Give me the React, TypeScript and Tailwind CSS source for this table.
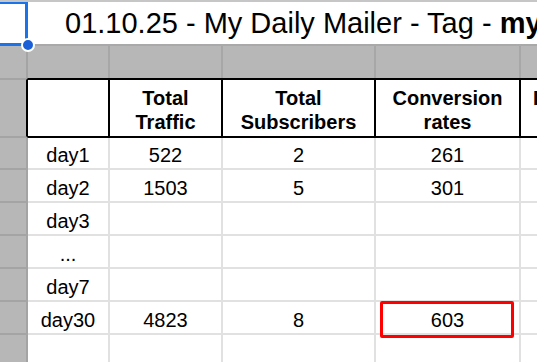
import React from "react";

const rows: { label: string; c1: string; c2: string; c3: string; h: string }[] = [
  { label: "day1", c1: "522", c2: "2", c3: "261", h: "h-[32px]" },
  { label: "day2", c1: "1503", c2: "5", c3: "301", h: "h-[33px]" },
  { label: "day3", c1: "", c2: "", c3: "", h: "h-[33px]" },
  { label: "...", c1: "", c2: "", c3: "", h: "h-[33px]" },
  { label: "day7", c1: "", c2: "", c3: "", h: "h-[33px]" },
  { label: "day30", c1: "4823", c2: "8", c3: "603", h: "h-[33px]" },
  { label: "", c1: "", c2: "", c3: "", h: "h-[33px]" },
];

const dataCell =
  "border-r-2 border-b-2 border-[#e1e1e1] flex items-end justify-center pb-[1px] leading-[24px] text-[20px] whitespace-nowrap";

export default function App() {
  return (
    <div className="relative w-[537px] h-[362px] overflow-hidden bg-white text-black font-['Liberation_Sans',Arial,sans-serif]">
      {/* top strip */}
      <div className="h-[2px] bg-[#c6c6c6]" />
      {/* title row */}
      <div className="flex h-[44px]">
        <div className="w-[28px] h-[44px] shrink-0 border-t-2 border-r-[3px] border-b-[3px] border-[#1a73e8] bg-white" />
        <div className="flex-1 border-b-2 border-[#a9a9a9] pl-[37px] pt-[5px] text-[29px] leading-[33px] whitespace-nowrap overflow-hidden">
          01.10.25 - My Daily Mailer - Tag - <span className="font-bold">my</span>
        </div>
      </div>
      {/* gray frozen row */}
      <div className="flex h-[32px] bg-[#b7b7b7]">
        <div className="w-[28px] shrink-0 border-r-2 border-[#a4a4a4]" />
        <div className="w-[82px] shrink-0 border-r-2 border-[#a7a7a7]" />
        <div className="w-[113px] shrink-0 border-r-2 border-[#a7a7a7]" />
        <div className="w-[153px] shrink-0 border-r-2 border-[#a7a7a7]" />
        <div className="w-[145px] shrink-0 border-r-2 border-[#a7a7a7]" />
        <div className="flex-1" />
      </div>
      {/* header row */}
      <div className="flex h-[60px] font-bold text-[20px] leading-[24px]">
        <div className="w-[28px] shrink-0 bg-[#b7b7b7] border-t-2 border-b-2 border-[#a4a4a4] border-r-2 border-r-black" />
        <div className="w-[82px] shrink-0 border-t-2 border-b-2 border-r-2 border-black" />
        <div className="w-[113px] shrink-0 border-t-2 border-b-2 border-r-2 border-black flex flex-col items-center justify-end pb-[2px]">
          <span>Total</span>
          <span>Traffic</span>
        </div>
        <div className="w-[153px] shrink-0 border-t-2 border-b-2 border-r-2 border-black flex flex-col items-center justify-end pb-[2px]">
          <span>Total</span>
          <span>Subscribers</span>
        </div>
        <div className="w-[145px] shrink-0 border-t-2 border-b-2 border-r-2 border-black flex flex-col items-center justify-end pb-[2px]">
          <span>Conversion</span>
          <span>rates</span>
        </div>
        <div className="flex-1 border-t-2 border-b-2 border-black flex flex-col justify-end pb-[2px] pl-[12px] whitespace-nowrap overflow-hidden">
          <span>Re</span>
          <span>&nbsp;</span>
        </div>
      </div>
      {/* data rows */}
      {rows.map((r, i) => (
        <div key={i} className={`flex ${r.h}`}>
          <div className="w-[28px] shrink-0 bg-[#b7b7b7] border-r-2 border-b-2 border-[#a4a4a4]" />
          <div className={`w-[82px] shrink-0 ${dataCell}`}>{r.label}</div>
          <div className={`w-[113px] shrink-0 ${dataCell}`}>{r.c1}</div>
          <div className={`w-[153px] shrink-0 ${dataCell}`}>{r.c2}</div>
          <div className={`relative w-[145px] shrink-0 ${dataCell}`}>
            {r.c3}
            {r.label === "day30" && (
              <div className="absolute left-[4px] top-[-1px] w-[134px] h-[37px] border-[3px] border-[#ff0000] rounded-[2px]" />
            )}
          </div>
          <div className="flex-1 border-b-2 border-[#e1e1e1]" />
        </div>
      ))}
      {/* selection handle */}
      <div className="absolute left-[21px] top-[38px] w-[14px] h-[14px] rounded-full bg-[#1a5fd8] border-2 border-white" />
    </div>
  );
}
